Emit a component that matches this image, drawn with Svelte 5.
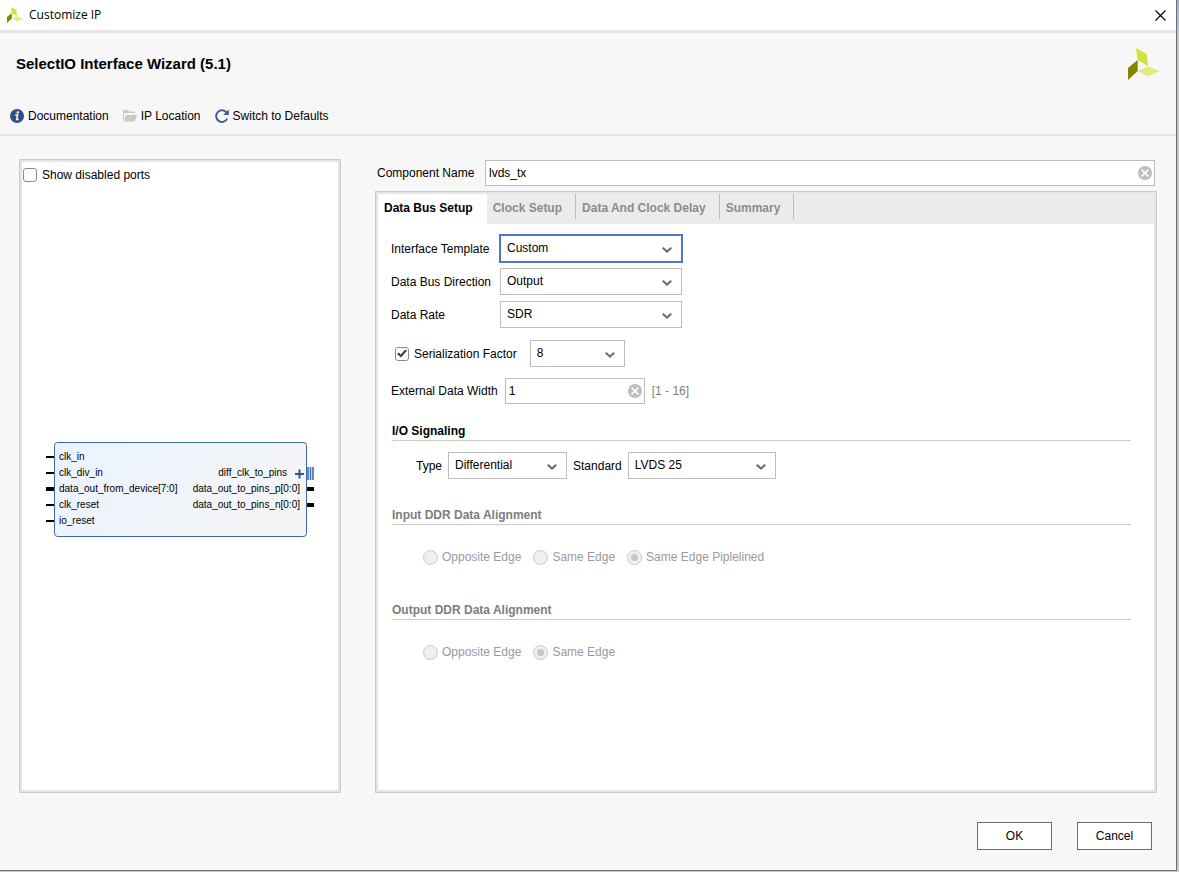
<script>
  let component_name = $state( 'lvds_tx' );
  let data_width = $state( '1' );
  let show_disabled = $state( false );
  let serialize = $state( true );
  let tab = $state( 0 );

  const tabs = ['Data Bus Setup', 'Clock Setup', 'Data And Clock Delay', 'Summary'];

  const general = [
    { id: 'template', label: 'Interface Template', options: ['Custom', 'Chip to Chip'] },
    { id: 'direction', label: 'Data Bus Direction', options: ['Output', 'Input'] },
    { id: 'rate', label: 'Data Rate', options: ['SDR', 'DDR'] }
  ];

  const alignments = [
    { id: 'input', title: 'Input DDR Data Alignment', options: ['Opposite Edge', 'Same Edge', 'Same Edge Piplelined'], selected: 2 },
    { id: 'output', title: 'Output DDR Data Alignment', options: ['Opposite Edge', 'Same Edge'], selected: 1 }
  ];

  const inputs = [
    { name: 'clk_in', bus: false },
    { name: 'clk_div_in', bus: false },
    { name: 'data_out_from_device[7:0]', bus: true },
    { name: 'clk_reset', bus: false },
    { name: 'io_reset', bus: false }
  ];
  const outputs = ['data_out_to_pins_p[0:0]', 'data_out_to_pins_n[0:0]'];
</script>

{#snippet logo( size )}
  <svg class="logo" width={size} height={size} viewBox="0 0 32 32" aria-hidden="true">
    <path fill="#d4e03a" d="M8 0 L18.7 6 L20 18 L9.7 12 Z"></path>
    <path fill="#858500" d="M0 20 L9.7 12 L9.7 23 L0 32 Z"></path>
    <path fill="#e3ea7e" d="M9.7 23.3 L20 18.3 L31.7 23 L20.7 28.3 Z"></path>
  </svg>
{/snippet}

{#snippet dropdown( id, options, size )}
  <span class="dropdown {size}">
    <select {id}>
      {#each options as option}
        <option>{option}</option>
      {/each}
    </select>
    <svg width="10" height="6" viewBox="0 0 10 6" aria-hidden="true">
      <path d="M0.7 0.7 L5 4.6 L9.3 0.7" fill="none" stroke="#6e6e6e" stroke-width="2"></path>
    </svg>
  </span>
{/snippet}

{#snippet clear( onclick )}
  <button class="clear" type="button" aria-label="Clear" {onclick}>
    <svg width="14" height="14" viewBox="0 0 14 14" aria-hidden="true">
      <circle cx="7" cy="7" r="7" fill="#bdbdbd"></circle>
      <path d="M3.6 3.6 L10.4 10.4 M10.4 3.6 L3.6 10.4" stroke="#ffffff" stroke-width="1.7"></path>
    </svg>
  </button>
{/snippet}

<div class="dialog">
  <header class="titlebar">
    {@render logo( 16 )}
    <span>Customize IP</span>
    <button type="button" aria-label="Close">
      <svg width="11" height="11" viewBox="0 0 11 11" aria-hidden="true">
        <path d="M0.5 0.5 L10.5 10.5 M10.5 0.5 L0.5 10.5" stroke="#000000" stroke-width="1.2"></path>
      </svg>
    </button>
  </header>

  <div class="banner">
    <div class="heading">
      <h1>SelectIO Interface Wizard (5.1)</h1>
      {@render logo( 32 )}
    </div>
    <nav>
      <button type="button">
        <svg width="14" height="14" viewBox="0 0 14 14" aria-hidden="true">
          <circle cx="7" cy="7" r="7" fill="#2f4f87"></circle>
          <circle cx="7.8" cy="3.4" r="1.2" fill="#ffffff"></circle>
          <path d="M5.2 6 H7.6 L6.7 10.4 H8.6" fill="none" stroke="#ffffff" stroke-width="1.5"></path>
        </svg>
        Documentation
      </button>
      <button type="button">
        <svg width="14" height="14" viewBox="0 0 14 14" aria-hidden="true">
          <path fill="#c9c9c9" d="M0 12 V2 Q0 1 1 1 H5 L6 2.5 H11 Q12 2.5 12 3.5 V5 H11 V4 H1.2 V9 Z"></path>
          <path fill="#c9c9c9" d="M3.4 6 H14 L11.8 12.6 H0.6 Z"></path>
        </svg>
        IP Location
      </button>
      <button type="button">
        <svg width="14" height="14" viewBox="0 0 14 14" aria-hidden="true">
          <path d="M11.6 3.6 A5.8 5.8 0 1 0 12.2 9.6" fill="none" stroke="#3f5f98" stroke-width="2"></path>
          <path fill="#3f5f98" d="M13.9 0.4 V6 H8.2 Z"></path>
        </svg>
        Switch to Defaults
      </button>
    </nav>
  </div>

  <main>
    <section class="panel ports">
      <label class="check">
        <input type="checkbox" bind:checked={show_disabled}>
        Show disabled ports
      </label>
      <div class="symbol">
        <svg width="268" height="96" viewBox="0 0 268 96">
          <defs>
            <linearGradient id="body" x1="0" y1="0" x2="1" y2="0.4">
              <stop offset="0" stop-color="#eaf3fe"></stop>
              <stop offset="1" stop-color="#f4f5f7"></stop>
            </linearGradient>
          </defs>
          <rect x="8.5" y="0.5" width="252" height="94" rx="3" fill="url(#body)" stroke="#3d67a8"></rect>
          {#each inputs as port, index}
            {@const y = 15 + index * 16}
            <path class="pin" class:bus={port.bus} d={`M 0 ${y} H 8`}></path>
            <text x="13" y={y + 3}>{port.name}</text>
          {/each}
          <text class="right" x="241" y="34">diff_clk_to_pins</text>
          <path d="M249 32 H258 M253.5 27.5 V36.5" stroke="#2f5590" stroke-width="2"></path>
          <path d="M262 25 V38 M264.5 25 V38 M267 25 V38" stroke="#3d6ca8" stroke-width="1.6"></path>
          {#each outputs as name, index}
            {@const y = 47 + index * 16}
            <path class="pin bus" d={`M 261 ${y} H 268`}></path>
            <text class="right" x="254" y={y + 3}>{name}</text>
          {/each}
        </svg>
      </div>
    </section>

    <div class="settings">
      <div class="name">
        <label for="name">Component Name</label>
        <span class="field">
          <input id="name" type="text" bind:value={component_name}>
          {@render clear( () => component_name = '' )}
        </span>
      </div>

      <section class="panel config">
        <div class="tabs" role="tablist">
          {#each tabs as title, index}
            <button
              class:selected={tab === index}
              onclick={() => tab = index}
              role="tab"
              aria-selected={tab === index}
              type="button">
              {title}
            </button>
          {/each}
        </div>

        <form>
          <div class="general">
            {#each general as item, index}
              <label for={item.id}>{item.label}</label>
              {@render dropdown( item.id, item.options, index === 0 ? 'wide focused' : 'wide' )}
            {/each}
          </div>

          <div class="row serial">
            <label class="check">
              <input type="checkbox" bind:checked={serialize}>
              Serialization Factor
            </label>
            {@render dropdown( 'factor', ['8', '7', '6', '5', '4', '3', '2'], 'small' )}
          </div>

          <div class="row external">
            <label for="width">External Data Width</label>
            <span class="field">
              <input id="width" type="text" bind:value={data_width}>
              {@render clear( () => data_width = '' )}
            </span>
            <span class="hint">[1 - 16]</span>
          </div>

          <h2>I/O Signaling</h2>
          <div class="row signaling">
            <label for="type">Type</label>
            {@render dropdown( 'type', ['Differential', 'Single-ended'], 'medium' )}
            <label for="standard">Standard</label>
            {@render dropdown( 'standard', ['LVDS 25', 'LVDS'], 'large' )}
          </div>

          {#each alignments as group}
            <fieldset disabled>
              <legend>{group.title}</legend>
              <div class="radios">
                {#each group.options as option, index}
                  <label>
                    <input type="radio" name={group.id} checked={index === group.selected}>
                    {option}
                  </label>
                {/each}
              </div>
            </fieldset>
          {/each}
        </form>
      </section>
    </div>
  </main>

  <footer>
    <button type="button">OK</button>
    <button type="button">Cancel</button>
  </footer>
</div>

<style>
  :global(body) {
    background: linear-gradient( #9fb3da 0, #b4c2dc 29px, #c8c8c8 30px, #c8c8c8 100% );
  }

  .dialog {
    background: #f7f7f7;
    border-bottom: 1px solid #6e6e6e;
    border-right: 1px solid #6e6e6e;
    box-sizing: border-box;
    color: #000000;
    display: flex;
    flex-direction: column;
    font-family: 'Liberation Sans', Arial, sans-serif;
    font-size: 12px;
    line-height: 16px;
    margin: 0 2px 1px 0;
    min-height: calc( 100vh - 1px );
  }

  button, input, select {
    box-sizing: border-box;
    color: inherit;
    font: inherit;
    margin: 0;
  }

  button {
    background: none;
    border: none;
    cursor: pointer;
    padding: 0;
  }

  svg {
    display: block;
    flex: none;
  }

  .titlebar {
    align-items: center;
    background: #ffffff;
    border-bottom: 3px solid #e6e6e6;
    display: flex;
    font-family: 'Open Sans', sans-serif;
    gap: 6px;
    height: 30px;
    padding: 0 10px 0 7px;
  }

  .titlebar button {
    margin-left: auto;
  }

  .banner {
    border-bottom: 2px solid #e6e6e6;
    padding: 15px 16px 10px 10px;
  }

  .heading {
    align-items: center;
    display: flex;
    justify-content: space-between;
    padding: 0 0 28px 6px;
  }

  h1 {
    font-size: 15px;
    font-weight: 700;
    line-height: 20px;
    margin: 0;
  }

  nav {
    display: flex;
    gap: 14px;
  }

  nav button {
    align-items: center;
    display: flex;
    gap: 4px;
  }

  main {
    display: flex;
    flex: 1;
    gap: 34px;
    padding: 23px 19px 0 19px;
  }

  .panel {
    background: #ffffff;
    border: 1px solid #cbcbcb;
    box-shadow: inset 0 0 0 2px #e5e5e5;
    box-sizing: border-box;
    padding: 2px;
  }

  .ports {
    display: flex;
    flex: none;
    flex-direction: column;
    width: 322px;
  }

  .ports .check {
    padding: 5px 1px 7px 1px;
  }

  .check {
    align-items: center;
    display: flex;
    gap: 5px;
  }

  .check input {
    appearance: none;
    background: #ffffff;
    border: 1px solid #8a8a8a;
    border-radius: 3px;
    display: grid;
    height: 14px;
    place-items: center;
    width: 14px;
  }

  .check input:checked::before {
    background: #404040;
    clip-path: polygon( 0 55%, 18% 38%, 38% 60%, 82% 5%, 100% 20%, 40% 95% );
    content: '';
    height: 9px;
    width: 10px;
  }

  .symbol {
    align-items: center;
    display: flex;
    flex: 1;
    justify-content: center;
  }

  .symbol text {
    font-size: 10px;
  }

  .symbol text.right {
    text-anchor: end;
  }

  .pin {
    stroke: #000000;
    stroke-width: 2px;
  }

  .pin.bus {
    stroke-width: 4px;
  }

  .settings {
    display: flex;
    flex: 1;
    flex-direction: column;
    gap: 5px;
  }

  .name {
    align-items: center;
    display: grid;
    gap: 8px;
    grid-template-columns: 100px 1fr;
    padding: 1px 2px 0 2px;
  }

  .field {
    align-items: center;
    background: #ffffff;
    border: 1px solid #bdbdbd;
    box-sizing: border-box;
    display: flex;
    height: 26px;
    padding: 0 2px;
  }

  .field input {
    background: none;
    border: none;
    flex: 1;
    min-width: 0;
    outline: none;
    padding: 0 1px;
  }

  .config {
    flex: 1;
  }

  .tabs {
    align-items: flex-start;
    background: #ebebeb;
    display: flex;
    height: 30px;
  }

  .tabs button {
    border-right: 1px solid #bdbdbd;
    color: #8c8c8c;
    font-weight: 700;
    height: 25px;
    padding: 3px 13px 0 6px;
  }

  .tabs button.selected {
    background: #ffffff;
    border-right: none;
    color: #000000;
    height: 30px;
    padding: 0 14px 2px 6px;
  }

  form {
    padding: 11px 23px 10px 13px;
  }

  .general {
    align-items: center;
    display: grid;
    gap: 6px;
    grid-template-columns: 103px max-content;
    white-space: nowrap;
  }

  .dropdown {
    align-items: center;
    display: grid;
    height: 27px;
  }

  .dropdown select {
    appearance: none;
    background: #ffffff;
    border: 1px solid #bdbdbd;
    border-radius: 0;
    grid-area: 1 / 1;
    height: 27px;
    outline: none;
    padding: 0 24px 1px 6px;
    width: 100%;
  }

  .dropdown svg {
    grid-area: 1 / 1;
    justify-self: end;
    margin: 2px 10px 0 0;
    pointer-events: none;
  }

  .dropdown.focused select {
    border-color: #4c78cc;
    outline: 1px solid #4c78cc;
  }

  .wide {
    width: 182px;
  }

  .small {
    width: 95px;
  }

  .medium {
    width: 119px;
  }

  .large {
    width: 148px;
  }

  .row {
    align-items: center;
    display: flex;
  }

  .serial {
    gap: 13px;
    padding: 12px 0 11px 4px;
  }

  .external {
    gap: 7px;
  }

  .external .field {
    width: 140px;
  }

  .hint {
    color: #7d7d7d;
  }

  h2, legend {
    border-bottom: 1px solid #cbcbcb;
    box-sizing: border-box;
    font-size: 12px;
    font-weight: 700;
    line-height: 16px;
    margin: 0;
    padding: 0 0 1px 0;
    width: 100%;
  }

  h2 {
    margin: 19px 0 11px 1px;
    width: auto;
  }

  .signaling {
    gap: 6px;
    padding: 0 0 28px 25px;
  }

  fieldset {
    border: none;
    color: #7d7d7d;
    margin: 0 0 0 1px;
    min-width: 0;
    padding: 0 0 37px 0;
  }

  .radios {
    color: #9a9a9a;
    display: flex;
    gap: 12px;
    padding: 24px 0 0 31px;
  }

  .radios label {
    align-items: center;
    display: flex;
    gap: 4px;
  }

  .radios input {
    appearance: none;
    background: #eeeff1;
    border: 1px solid #c9c9c9;
    border-radius: 50%;
    display: grid;
    height: 15px;
    place-items: center;
    width: 15px;
  }

  .radios input:checked::before {
    background: #c6c6c6;
    border-radius: 50%;
    content: '';
    height: 7px;
    width: 7px;
  }

  footer {
    display: flex;
    gap: 25px;
    justify-content: flex-end;
    padding: 29px 24px 20px 24px;
  }

  footer button {
    background: #ffffff;
    border: 1px solid #6e6e6e;
    height: 28px;
    width: 75px;
  }
</style>
